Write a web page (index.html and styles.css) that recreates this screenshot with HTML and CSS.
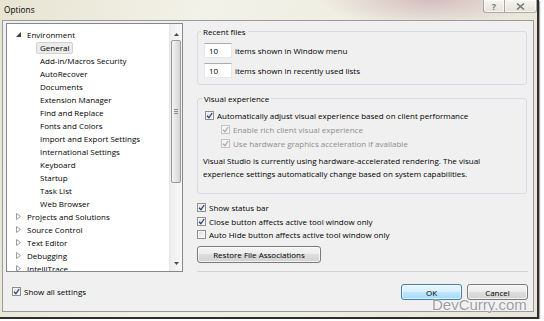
FILE: index.html
```html
<!DOCTYPE html>
<html>
<head>
    <title>Options</title>
    <link rel="stylesheet" href="styles.css">
</head>
<body>
    <div class="window">
        <div class="titlebar">
            <span class="title">Options</span>
            <div class="caption-buttons">
                <span class="cap-btn help">?</span>
                <span class="cap-btn close">
                    <svg width="9" height="7" viewBox="0 0 9 7"><path d="M1 0.5 L8 6.5 M8 0.5 L1 6.5" stroke="#7a7a7a" stroke-width="1.6" fill="none"/></svg>
                </span>
            </div>
        </div>

        <div class="client">
            <div class="main">
                <div class="tree">
                    <ul class="tree-list">
                        <li class="node"><span class="arrow"><svg width="5" height="5"><path d="M5 0 L5 5 L0 5Z" fill="#3f3f3f"/></svg></span>Environment</li>
                        <li class="child"><span class="selected">General</span></li>
                        <li class="child"><span>Add-in/Macros Security</span></li>
                        <li class="child"><span>AutoRecover</span></li>
                        <li class="child"><span>Documents</span></li>
                        <li class="child"><span>Extension Manager</span></li>
                        <li class="child"><span>Find and Replace</span></li>
                        <li class="child"><span>Fonts and Colors</span></li>
                        <li class="child"><span>Import and Export Settings</span></li>
                        <li class="child"><span>International Settings</span></li>
                        <li class="child"><span>Keyboard</span></li>
                        <li class="child"><span>Startup</span></li>
                        <li class="child"><span>Task List</span></li>
                        <li class="child"><span>Web Browser</span></li>
                        <li class="node"><span class="arrow"><svg width="5" height="7"><path d="M0.5 0.5 L4.5 3.5 L0.5 6.5Z" fill="none" stroke="#9a9a9a"/></svg></span>Projects and Solutions</li>
                        <li class="node"><span class="arrow"><svg width="5" height="7"><path d="M0.5 0.5 L4.5 3.5 L0.5 6.5Z" fill="none" stroke="#9a9a9a"/></svg></span>Source Control</li>
                        <li class="node"><span class="arrow"><svg width="5" height="7"><path d="M0.5 0.5 L4.5 3.5 L0.5 6.5Z" fill="none" stroke="#9a9a9a"/></svg></span>Text Editor</li>
                        <li class="node"><span class="arrow"><svg width="5" height="7"><path d="M0.5 0.5 L4.5 3.5 L0.5 6.5Z" fill="none" stroke="#9a9a9a"/></svg></span>Debugging</li>
                        <li class="node"><span class="arrow"><svg width="5" height="7"><path d="M0.5 0.5 L4.5 3.5 L0.5 6.5Z" fill="none" stroke="#9a9a9a"/></svg></span>IntelliTrace</li>
                    </ul>
                    <div class="scrollbar">
                        <div class="sb-btn"><svg width="5" height="3"><path d="M2.5 0 L5 3 L0 3Z" fill="#4a4a4a"/></svg></div>
                        <div class="sb-track">
                            <div class="sb-thumb"><span class="grip"></span></div>
                        </div>
                        <div class="sb-btn down"><svg width="5" height="3"><path d="M0 0 L5 0 L2.5 3Z" fill="#4a4a4a"/></svg></div>
                    </div>
                </div>

                <div class="pane">
                    <fieldset class="group recent">
                        <legend>Recent files</legend>
                        <div class="num-row"><span class="textbox">10</span><span>items shown in Window menu</span></div>
                        <div class="num-row"><span class="textbox">10</span><span>items shown in recently used lists</span></div>
                    </fieldset>

                    <fieldset class="group visual">
                        <legend>Visual experience</legend>
                        <div class="check"><span class="box"><svg width="7" height="7"><path d="M1 3.8 L2.9 5.8 L6.2 1" fill="none" stroke="#2c3f78" stroke-width="1.3"/></svg></span>Automatically adjust visual experience based on client performance</div>
                        <div class="check sub disabled"><span class="box"><svg width="7" height="7"><path d="M1 3.8 L2.9 5.8 L6.2 1" fill="none" stroke="#a9a9a9" stroke-width="1.3"/></svg></span>Enable rich client visual experience</div>
                        <div class="check sub disabled"><span class="box"><svg width="7" height="7"><path d="M1 3.8 L2.9 5.8 L6.2 1" fill="none" stroke="#a9a9a9" stroke-width="1.3"/></svg></span>Use hardware graphics acceleration if available</div>
                        <p class="note">Visual Studio is currently using hardware-accelerated rendering. The visual<br>experience settings automatically change based on system capabilities.</p>
                    </fieldset>

                    <div class="options">
                        <div class="check"><span class="box"><svg width="7" height="7"><path d="M1 3.8 L2.9 5.8 L6.2 1" fill="none" stroke="#2c3f78" stroke-width="1.3"/></svg></span>Show status bar</div>
                        <div class="check"><span class="box"><svg width="7" height="7"><path d="M1 3.8 L2.9 5.8 L6.2 1" fill="none" stroke="#2c3f78" stroke-width="1.3"/></svg></span>Close button affects active tool window only</div>
                        <div class="check"><span class="box"></span>Auto Hide button affects active tool window only</div>
                    </div>
                    <button class="btn restore">Restore File Associations</button>
                </div>
            </div>

            <div class="footer">
                <div class="check"><span class="box"><svg width="7" height="7"><path d="M1 3.8 L2.9 5.8 L6.2 1" fill="none" stroke="#2c3f78" stroke-width="1.3"/></svg></span>Show all settings</div>
                <div class="actions">
                    <button class="btn default">OK</button>
                    <button class="btn">Cancel</button>
                </div>
            </div>
        </div>

        <div class="watermark">DevCurry.com</div>
    </div>
</body>
</html>
```

FILE: styles.css
```css
body {
    margin: 0;
    background: #ffffff;
    font-family: "Open Sans", "Noto Sans", sans-serif;
    font-size: 8px;
    color: #000;
}

.window {
    position: relative;
    width: 537px;
    height: 317px;
    border-right: 2px solid #2e2e2e;
    border-bottom: 2px solid #2e2e2e;
    box-shadow: 1px 1px 1px rgba(0,0,0,0.35);
    background:
        radial-gradient(ellipse 110px 26px at 430px 0, rgba(196,160,170,0.6), rgba(196,160,170,0)),
        linear-gradient(100deg, #e7e4d2 0%, #f3f2e9 35%, #efeee2 60%, #e9e5d8 100%);
}

/* title bar */
.titlebar {
    height: 20px;
    display: flex;
    justify-content: space-between;
    align-items: flex-start;
}

.title {
    padding-left: 4px;
    line-height: 20px;
    font-size: 8.3px;
}

.caption-buttons {
    display: flex;
}

.cap-btn {
    height: 12px;
    display: flex;
    align-items: center;
    justify-content: center;
    border: 1px solid rgba(110,110,110,0.55);
    border-top: none;
    background: linear-gradient(#f6f5ef, #e4e2d8);
    box-shadow: inset 0 0 0 1px rgba(255,255,255,0.6);
    color: #7a7a7a;
    font-weight: bold;
    font-size: 9px;
}

.cap-btn.help {
    width: 20px;
    border-radius: 0 0 0 3px;
    border-right: none;
}

.cap-btn.close {
    width: 31px;
    border-radius: 0 0 3px 0;
}

/* client area */
.client {
    box-sizing: border-box;
    width: 532px;
    height: 292px;
    margin-left: 2px;
    border: 1px solid #9b9b9b;
    background: #f0f0f0;
    padding: 2px 0 0 3px;
    display: flex;
    flex-direction: column;
}

.main {
    display: flex;
    height: 249px;
}

/* tree */
.tree {
    box-sizing: border-box;
    width: 177px;
    height: 249px;
    border: 1px solid #828790;
    background: #fff;
    display: flex;
}

.tree-list {
    list-style: none;
    margin: 0;
    padding: 4px 0 0 0;
    flex: 1;
    overflow: hidden;
}

.tree-list li {
    height: 13px;
    line-height: 13px;
    display: flex;
    align-items: center;
    white-space: nowrap;
}

.tree-list .node {
    padding-left: 9px;
}

.tree-list .arrow {
    width: 11px;
    display: flex;
    align-items: center;
}

.tree-list .child {
    padding-left: 29px;
}

.tree-list .child span {
    padding: 0 3px;
    line-height: 10px;
    border: 1px solid transparent;
    border-radius: 2px;
}

.tree-list .child span.selected {
    background: #ececec;
    border-color: #d2d2d2;
}

.scrollbar {
    width: 12px;
    display: flex;
    flex-direction: column;
    border-left: 1px solid #e6e6e6;
    background: linear-gradient(90deg, #eeeeee, #f8f8f8);
}

.sb-btn {
    height: 15px;
    display: flex;
    align-items: flex-end;
    justify-content: center;
    padding-bottom: 3px;
    box-sizing: border-box;
}

.sb-btn.down {
    align-items: flex-start;
    padding: 6px 0 0 0;
}

.sb-track {
    flex: 1;
    padding-top: 1px;
}

.sb-thumb {
    box-sizing: border-box;
    height: 143px;
    margin: 0 1px 0 1px;
    border: 1px solid #979797;
    border-radius: 2px;
    background: linear-gradient(90deg, #f4f4f4, #e4e4e4 50%, #d5d5d5);
    display: flex;
    align-items: center;
    justify-content: center;
}

.grip {
    width: 4px;
    height: 5px;
    background: repeating-linear-gradient(#8a8a8a 0 1px, transparent 1px 2px);
}

/* right pane */
.pane {
    width: 331px;
    margin-left: 14px;
    padding-top: 2px;
    border-bottom: 1px solid #d2d2d2;
    box-sizing: border-box;
}

.group {
    margin: 0 1px 0 0;
    padding: 0 6px 6px 6px;
    border: 1px solid #d5dbe0;
    border-radius: 3px;
}

.group legend {
    margin-left: -3px;
    padding: 0 2px;
    line-height: 13px;
}

.num-row {
    display: flex;
    align-items: center;
    height: 16px;
    margin-top: 4px;
    gap: 3px;
}

.textbox {
    box-sizing: border-box;
    width: 28px;
    height: 15px;
    line-height: 13px;
    padding-left: 4px;
    background: #fff;
    border: 1px solid #e2e8ee;
    border-top-color: #abadb3;
}

.visual {
    margin-top: 7px;
    padding-left: 7px;
    padding-bottom: 13px;
}

.check {
    display: flex;
    align-items: center;
    white-space: nowrap;
    gap: 3px;
}

.visual .check {
    height: 14px;
}

.visual .check:first-of-type {
    margin-top: 3px;
}

.check .box {
    box-sizing: border-box;
    width: 9px;
    height: 9px;
    border: 1px solid #8e8f8f;
    background: linear-gradient(135deg, #dcdcdc, #fbfbfb);
    box-shadow: inset 0 0 0 1px #f6f6f6;
    display: flex;
    align-items: center;
    justify-content: center;
}

.check.sub {
    padding-left: 16px;
}

.check.disabled {
    color: #8d8d8d;
}

.check.disabled .box {
    border-color: #c3c3c3;
    background: #f4f4f4;
}

.note {
    margin: 5px 0 0 -2px;
    line-height: 12.5px;
    white-space: nowrap;
}

.options {
    margin-top: 7px;
}

.options .check {
    height: 13.5px;
}

.btn {
    box-sizing: border-box;
    height: 17px;
    padding: 0;
    font-family: inherit;
    font-size: 8px;
    color: #000;
    border: 1px solid #7a7a7a;
    border-radius: 3px;
    background: linear-gradient(#f4f4f4, #ececec 50%, #dedede 50%, #d2d2d2);
    box-shadow: inset 0 0 0 1px rgba(255,255,255,0.7);
}

.restore {
    width: 124px;
    margin-top: 4px;
}

/* footer */
.footer {
    flex: 1;
    display: flex;
    align-items: center;
    justify-content: space-between;
    padding: 0 5px 0 6px;
}

.actions {
    display: flex;
    gap: 5px;
    margin-top: 1px;
}

.actions .btn {
    width: 61px;
    height: 16px;
}

.btn.default {
    border-color: #3c7fb1;
    background: linear-gradient(#eaf6fd, #d9f0fc 50%, #bee6fd 50%, #a7d9f5);
    box-shadow: inset 0 0 0 1px rgba(255,255,255,0.6);
}

/* blog watermark laid over the dialog corner */
.watermark {
    position: absolute;
    left: 432px;
    top: 297px;
    font-family: "Liberation Sans", Arial, sans-serif;
    font-size: 15px;
    line-height: 15px;
    color: #9c9ca4;
    text-shadow: 0 0 2px #fff, 0 0 1px #fff;
}
```
